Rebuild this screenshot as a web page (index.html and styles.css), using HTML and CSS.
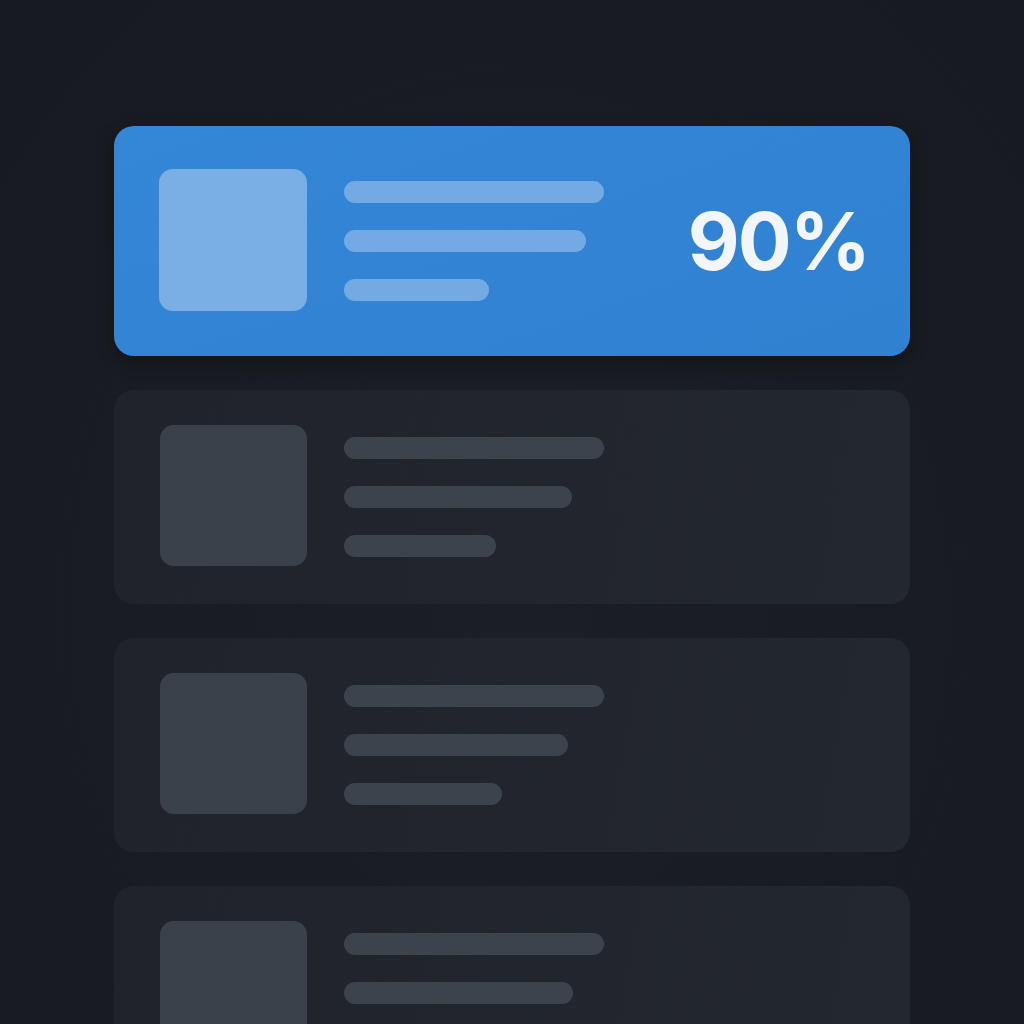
FILE: index.html
```html
<!DOCTYPE html>
<html lang="en">
<head>
    <meta charset="UTF-8">
    <meta name="viewport" content="width=device-width, initial-scale=1.0">
    <title>Progress list</title>
    <link rel="stylesheet" href="styles.css">
</head>
<body>
    <div class="list">
        <div class="card active">
            <div class="thumb"></div>
            <div class="lines">
                <div class="line" style="width: 260px"></div>
                <div class="line" style="width: 242px"></div>
                <div class="line" style="width: 145px"></div>
            </div>
            <div class="percent">90%</div>
        </div>

        <div class="card">
            <div class="thumb"></div>
            <div class="lines">
                <div class="line" style="width: 260px"></div>
                <div class="line" style="width: 228px"></div>
                <div class="line" style="width: 152px"></div>
            </div>
        </div>

        <div class="card">
            <div class="thumb"></div>
            <div class="lines">
                <div class="line" style="width: 260px"></div>
                <div class="line" style="width: 224px"></div>
                <div class="line" style="width: 158px"></div>
            </div>
        </div>

        <div class="card">
            <div class="thumb"></div>
            <div class="lines">
                <div class="line" style="width: 260px"></div>
                <div class="line" style="width: 229px"></div>
                <div class="line" style="width: 150px"></div>
            </div>
        </div>
    </div>
</body>
</html>
```

FILE: styles.css
```css
html, body {
    height: 100%;
}
body {
    margin: 0;
    overflow: hidden;
    font-family: Inter, "Noto Sans", sans-serif;
    background: radial-gradient(ellipse at 50% 60%, #1b1e25 0%, #171a20 100%);
}
.list {
    width: 796px;
    margin: 0 auto;
    padding-top: 126px;
    display: flex;
    flex-direction: column;
    gap: 34px;
}
.card {
    flex-shrink: 0;
    height: 214px;
    display: flex;
    align-items: center;
    padding: 0 44px 0 46px;
    border-radius: 20px;
    background: linear-gradient(100deg, #20232a 0%, #23272f 100%);
    box-sizing: border-box;
}
.card.active {
    height: 230px;
    padding: 0 41px 0 45px;
    background: linear-gradient(160deg, #3486d6 0%, #3181d1 100%);
    box-shadow: 0 6px 18px rgba(0, 0, 0, 0.3);
}
.thumb {
    width: 147px;
    height: 141px;
    flex-shrink: 0;
    margin-top: -4px;
    border-radius: 14px;
    background-color: #3b414b;
}
.active .thumb {
    width: 148px;
    height: 142px;
    margin-top: -2px;
    background-color: #7aafe6;
}
.lines {
    display: flex;
    flex-direction: column;
    gap: 27px;
    margin-left: 37px;
}
.line {
    height: 22px;
    border-radius: 11px;
    background-color: #3d434d;
}
.active .line {
    background-color: #74aae4;
}
.percent {
    margin-left: auto;
    color: #f2f6fb;
    font-size: 80px;
    font-weight: 700;
    letter-spacing: -2px;
    line-height: 1;
}
```
